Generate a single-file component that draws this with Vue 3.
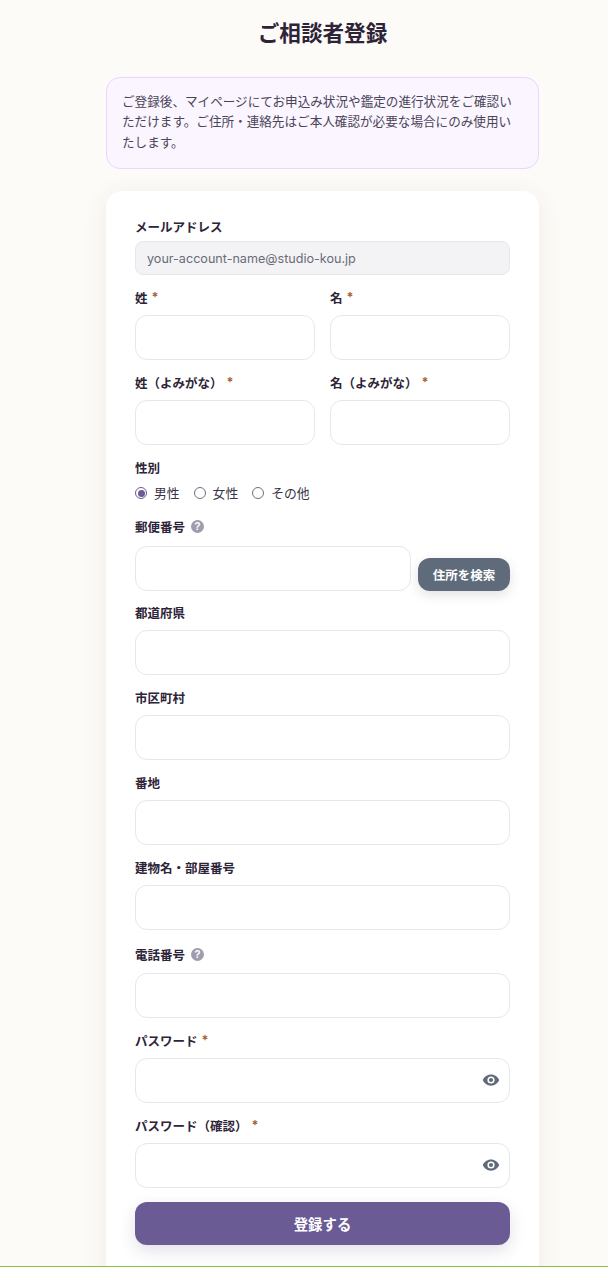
<script setup>
const eyePath = 'M12 4.500C7 4.500 2.900 7.600 1 12c1.900 4.400 6 7.500 11 7.500s9.100-3.100 11-7.500C21.100 7.600 17 4.500 12 4.500zm0 12.300a4.800 4.800 0 1 1 0-9.600 4.800 4.800 0 0 1 0 9.600zm0-7.600a2.800 2.800 0 1 0 0 5.600 2.800 2.800 0 0 0 0-5.600z'
const addressFields = ['都道府県', '市区町村', '番地', '建物名・部屋番号']
const passwordFields = ['パスワード', 'パスワード（確認）']
const nameRows = [
  ['姓', '名'],
  ['姓（よみがな）', '名（よみがな）'],
]
const genders = ['男性', '女性', 'その他']
</script>

<template>
  <div class="viewport">
    <main class="page">
      <h1 class="title">ご相談者登録</h1>
      <p class="notice">ご登録後、マイページにてお申込み状況や鑑定の進行状況をご確認いただけます。ご住所・連絡先はご本人確認が必要な場合にのみ使用いたします。</p>
      <form class="card" @submit.prevent>
        <div class="field email-field">
          <label class="label">メールアドレス</label>
          <div class="readonly">your-account-name@studio-kou.jp</div>
        </div>

        <div v-for="(row, i) in nameRows" :key="i" class="two">
          <div v-for="f in row" :key="f" class="field">
            <label class="label">{{ f }}<span class="req">*</span></label>
            <input class="input" type="text" />
          </div>
        </div>

        <div class="field gender">
          <label class="label">性別</label>
          <div class="radios">
            <label v-for="(g, i) in genders" :key="g" class="radio">
              <span class="dot" :class="{ on: i === 0 }"></span><span class="radio-text">{{ g }}</span>
            </label>
          </div>
        </div>

        <div class="field zip-field">
          <label class="label">郵便番号
            <svg class="help" viewBox="0 0 24 24"><circle cx="12" cy="12" r="12" fill="#a09cae"/><text x="12" y="18.500" text-anchor="middle" class="help-q">?</text></svg>
          </label>
          <div class="zip">
            <input class="input" type="text" />
            <button class="search" type="button">住所を検索</button>
          </div>
        </div>

        <div v-for="f in addressFields" :key="f" class="field">
          <label class="label">{{ f }}</label>
          <input class="input" type="text" />
        </div>

        <div class="field phone">
          <label class="label">電話番号
            <svg class="help" viewBox="0 0 24 24"><circle cx="12" cy="12" r="12" fill="#a09cae"/><text x="12" y="18.500" text-anchor="middle" class="help-q">?</text></svg>
          </label>
          <input class="input" type="text" />
        </div>

        <div v-for="f in passwordFields" :key="f" class="field">
          <label class="label">{{ f }}<span class="req">*</span></label>
          <div class="pw">
            <input class="input" type="password" />
            <svg class="eye" viewBox="0 0 24 24"><path :d="eyePath" fill="#5f6b7a" fill-rule="evenodd"/></svg>
          </div>
        </div>

        <button class="submit" type="button">登録する</button>
      </form>
    </main>
    <div class="greenline"></div>
  </div>
</template>

<style>
html, body { margin: 0; background: #fdfbf7; }
</style>

<style scoped>
.viewport {
  position: relative;
  height: 1267px;
  overflow: hidden;
  background: #fdfbf7;
  font-family: Inter, "Noto Sans CJK JP", sans-serif;
  color: #2d2438;
}
.page {
  width: 433px;
  margin-left: 106px;
  box-sizing: border-box;
}
.title {
  margin: 0;
  padding-top: 17px;
  height: 77px;
  box-sizing: border-box;
  text-align: center;
  font-size: 21.6px;
  line-height: 32px;
  font-weight: 700;
}
.notice {
  margin: 0 0 22px;
  padding: 13.500px 15px;
  height: 92px;
  box-sizing: border-box;
  background: #faf5ff;
  border: 1px solid #e9d5ff;
  border-radius: 14px;
  font-size: 12.600px;
  line-height: 20.600px;
  color: #4a4458;
}
.card {
  background: #fff;
  border-radius: 16px;
  padding: 26px 29px 60px;
  box-shadow: 0 4px 24px rgba(90, 70, 40, 0.08);
}
.field { margin-bottom: 13px; }
.two {
  display: grid;
  grid-template-columns: 1fr 1fr;
  gap: 15px;
}
.label {
  display: flex;
  align-items: center;
  height: 20px;
  padding-bottom: 2px;
  box-sizing: border-box;
  margin-bottom: 7px;
  font-size: 12.500px;
  font-weight: 700;
  color: #2d2438;
}
.email-field .label { margin-bottom: 4px; }
.req {
  margin-left: 4px;
  color: #a8623a;
  font-size: 12.500px;
  font-weight: 700;
}
.readonly {
  height: 34px;
  box-sizing: border-box;
  padding: 0 11px;
  display: flex;
  align-items: center;
  background: #f3f3f6;
  border: 1px solid #e5e7eb;
  border-radius: 8px;
  font-size: 12.600px;
  color: #6b6b78;
}
.input {
  display: block;
  width: 100%;
  height: 45px;
  box-sizing: border-box;
  border: 1px solid #e5e7eb;
  border-radius: 12px;
  background: #fff;
  outline: none;
}
.gender { margin-bottom: 14px; }
.gender .label { margin-bottom: 5px; }
.radios {
  display: flex;
  gap: 14px;
  height: 20px;
  align-items: center;
}
.radio {
  display: flex;
  align-items: center;
  gap: 7px;
  font-size: 12.800px;
  color: #3a3345;
}
.radio-text { margin-bottom: 2px; }
.dot {
  position: relative;
  width: 10px;
  height: 10px;
  border: 1px solid #6b7280;
  border-radius: 50%;
  background: #fff;
  flex: none;
}
.dot.on { border-color: #6b5b95; }
.dot.on::after {
  content: "";
  position: absolute;
  inset: 1.500px;
  border-radius: 50%;
  background: #6b5b95;
}
.help {
  width: 13px;
  height: 13px;
  margin-left: 6px;
}
.help-q {
  fill: #fff;
  font-size: 19px;
  font-weight: 700;
  font-family: "Liberation Sans", sans-serif;
}
.zip-field { margin-bottom: 12px; }
.zip-field .label { margin-bottom: 9px; }
.zip {
  display: flex;
  align-items: flex-end;
  gap: 7px;
}
.search {
  flex: none;
  width: 92px;
  height: 33px;
  border: 0;
  border-radius: 12px;
  background: #5f6b7a;
  color: #fff;
  font: 700 12.500px Inter, "Noto Sans CJK JP", sans-serif;
  box-shadow: 0 4px 12px rgba(60, 60, 80, 0.15);
}
.phone { padding-top: 2px; }
.phone .label { margin-bottom: 8px; }
.pw { position: relative; }
.eye {
  position: absolute;
  right: 10.500px;
  top: 13px;
  width: 18px;
  height: 18px;
}
.submit {
  display: block;
  width: 100%;
  height: 43px;
  margin-top: 14px;
  border: 0;
  border-radius: 12px;
  background: #6b5b95;
  color: #fff;
  font: 700 14.400px Inter, "Noto Sans CJK JP", sans-serif;
  box-shadow: 0 6px 16px rgba(60, 50, 90, 0.15);
}
.greenline {
  position: absolute;
  left: 0;
  right: 0;
  bottom: 0;
  height: 1px;
  background: #84c341;
}
</style>
